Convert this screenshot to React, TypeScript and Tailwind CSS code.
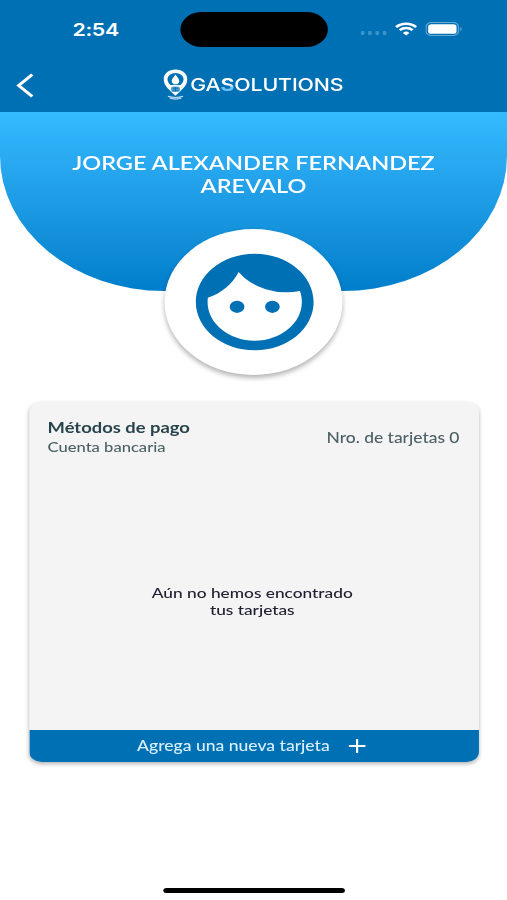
import { MdFace } from 'react-icons/md';

const StatusBar = () => (
  <div className="flex h-[58px] items-start text-white">
    <div className="w-[148px] pl-[59.5px] pt-[18px] font-['Inter',sans-serif] text-[17.5px] font-semibold leading-[23px] tracking-[-0.3px]">
      2:54
    </div>
    <div className="mt-3 h-[35px] w-[121px] rounded-full bg-black" />
    <div className="flex items-center pl-[26.5px] pt-[21.5px]">
      <div className="mt-[9px] flex gap-[3px]">
        {[0, 1, 2, 3].map((dot) => (
          <span key={dot} className="h-[3.5px] w-[3px] rounded-[1px] bg-[#3b92cb]" />
        ))}
      </div>
      <svg className="ml-[7px] h-[14px] w-[18.5px]" viewBox="0 0 18.5 14" fill="none" stroke="white" strokeWidth="2.4">
        <path d="M1 5.1a11.8 11.8 0 0 1 16.5 0" />
        <path d="M4 8.2a7.5 7.5 0 0 1 10.5 0" />
        <path d="M9.25 13.5 6.6 10.9a3.8 3.8 0 0 1 5.3 0z" fill="white" stroke="none" />
      </svg>
      <svg className="ml-[7px] h-[14px] w-[31px]" viewBox="0 0 31 14">
        <rect x="0.6" y="0.6" width="26.6" height="12.8" rx="4" fill="none" stroke="#65aad8" />
        <rect x="2.3" y="2.2" width="23.3" height="9.6" rx="2.6" fill="white" />
        <path d="M28.7 5v4.2c1.6-.7 1.6-3.5 0-4.2z" fill="#65aad8" />
      </svg>
    </div>
  </div>
);

const Logo = () => (
  <div className="flex items-center">
    <svg className="mb-[2px] h-[31px] w-[20px]" viewBox="0 0 20 31">
      <path
        d="M10 .6C4.5.6.3 4.8.3 10.3c0 6.7 5 11 9.7 16.4 4.7-5.4 9.7-9.7 9.7-16.4C19.7 4.8 15.5.6 10 .6z"
        fill="white"
      />
      <circle cx="10" cy="10.5" r="6.6" fill="#0070b5" />
      <path d="M10 5.5c1.4 2.7 3.1 4.5 3.1 6.5a3.1 3.1 0 0 1-6.2 0c0-2 1.7-3.8 3.1-6.5z" fill="white" />
      <path d="M5 17.3c3-2 7-2 10 0L10 25.5z" fill="white" />
      <rect x="6.3" y="17.4" width="7.4" height="5.6" rx="2" fill="#5da3d0" />
      <path d="M7.5 19.2h5M7.5 21.2h5M10 18v4.5" stroke="#0070b5" strokeWidth="0.8" />
      <path d="M3.8 27.3c3.3 1.6 9.1 1.6 12.4 0M5.3 29.3c3 1 6.4 1 9.4 0" stroke="#c8e1f2" strokeWidth="1.1" fill="none" />
    </svg>
    <span className="ml-[2px] font-['Inter',sans-serif] text-[17.5px] font-medium leading-none tracking-[-0.1px] text-white">
      GA
      <span className="bg-gradient-to-b from-white from-50% to-[#6cc2fb] to-65% bg-clip-text font-bold text-transparent">
        S
      </span>
      OLUTIONS
    </span>
  </div>
);

const Header = () => (
  <header className="h-[111.5px] bg-[#0070b5]">
    <StatusBar />
    <div className="grid h-[54px] grid-cols-[134px_1fr] items-center">
      <svg className="ml-[13px] h-[25px] w-[15px]" viewBox="0 0 15 25" fill="none" stroke="white" strokeWidth="2.7">
        <path d="M13.5 1.5 2.3 12.5l11.2 11" />
      </svg>
      <Logo />
    </div>
  </header>
);

const Profile = () => (
  <section className="flex flex-col items-center">
    <div className="h-[179.5px] w-full rounded-b-[135px] bg-gradient-to-b from-[#34baff] to-[#007ecb] pt-[39px]">
      <h1 className="text-center text-[19.3px] font-semibold leading-[23.5px] text-white">
        JORGE ALEXANDER FERNANDEZ
        <br />
        AREVALO
      </h1>
    </div>
    <div className="-mt-[62px] flex size-[145.5px] items-center justify-center rounded-full bg-white shadow-[0_3px_5px_rgba(0,0,0,0.3)]">
      <MdFace className="ml-[1px] size-[116px] text-[#0070b5]" />
    </div>
  </section>
);

const PaymentMethods = () => (
  <section className="mx-[23.5px] mt-[27.5px] flex h-[359.5px] flex-col overflow-hidden rounded-[10px] bg-[#f4f4f4] shadow-[0_2px_4px_rgba(0,0,0,0.3)]">
    <div className="flex items-center justify-between px-[15.5px] pt-[15px] text-[#4c6066]">
      <div>
        <h2 className="text-[15.1px] font-bold leading-[20px] text-[#27444c]">Métodos de pago</h2>
        <p className="text-[13.6px] font-medium leading-[20px]">Cuenta bancaria</p>
      </div>
      <span className="pt-[2px] text-[14.3px] font-medium">Nro. de tarjetas 0</span>
    </div>
    <div className="flex flex-1 items-center justify-center pt-[16px] text-center text-[14.2px] font-medium leading-[17.5px] text-[#202030]">
      <p className="-ml-[2px]">
        Aún no hemos encontrado
        <br />
        tus tarjetas
      </p>
    </div>
    <button className="flex h-[32px] items-center bg-[#0070b5] pl-[89px] text-[14.4px] font-medium text-[#d9f0ff]">
      <span className="pt-[1px]">Agrega una nueva tarjeta</span>
      <svg className="ml-[15px] size-[14px]" viewBox="0 0 14 14" stroke="white" strokeWidth="1.8">
        <path d="M7 0v14M0 7h14" />
      </svg>
    </button>
  </section>
);

export default function App() {
  return (
    <div className="h-[900px] w-[507px] overflow-hidden bg-white">
      {/* layout is 416px wide and stretched horizontally to fill the 507px frame */}
      <div className="flex h-[900px] w-[416px] origin-top-left scale-x-[1.21875] flex-col font-['Lato',sans-serif]">
        <Header />
        <Profile />
        <PaymentMethods />
        <div className="mx-auto mb-[7.5px] mt-auto h-[5px] w-[149px] rounded-full bg-black" />
      </div>
    </div>
  );
}
